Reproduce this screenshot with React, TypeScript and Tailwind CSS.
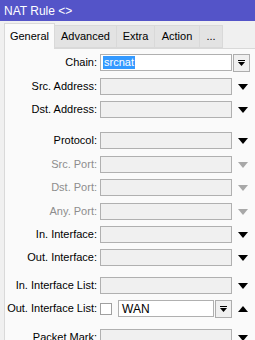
import type { ReactNode } from 'react'

const Arrow = ({ up, muted }: { up?: boolean; muted?: boolean }) => (
  <svg width="10" height="6" viewBox="0 0 10 6" className={up ? 'rotate-180' : ''}>
    <path d="M0 0H10L5 6Z" fill={muted ? '#a8a8a8' : '#000'} />
  </svg>
)

const PickButton = () => (
  <div className="w-[17px] h-[18px] border border-[#adadad] bg-[#f0f0f0] flex flex-col items-center justify-center">
    <div className="w-[7px] h-px bg-black mb-[1px]" />
    <svg width="7" height="4" viewBox="0 0 7 4">
      <path d="M0 0H7L3.5 4Z" fill="#000" />
    </svg>
  </div>
)

const Label = ({ children, muted }: { children: ReactNode; muted?: boolean }) => (
  <div className={`w-[92px] text-right whitespace-nowrap ${muted ? 'text-[#8d8d8d]' : 'text-black'}`}>{children}</div>
)

const Field = ({ label, muted, className = '' }: { label: string; muted?: boolean; className?: string }) => (
  <div className={`flex items-center h-[17px] ${className}`}>
    <Label muted={muted}>{label}</Label>
    <div className="ml-[3px] w-[132px] h-[17px] border border-[#b0b0b0] bg-[#f0f0f0]" />
    <div className="ml-[6px] flex items-center">
      <Arrow muted={muted} />
    </div>
  </div>
)

const Separator = ({ className = '' }: { className?: string }) => (
  <div className={`ml-[3px] w-[240px] h-px bg-[#cfcfcf] ${className}`} />
)

export default function App() {
  return (
    <div className="w-[255px] h-[340px] overflow-hidden bg-[#f0f0f0] font-['Liberation_Sans',Arial,sans-serif] text-[11px] leading-none">
      <div className="h-[21px] bg-[#5454c8] text-white text-[12px] pl-1 flex items-center">NAT Rule &lt;&gt;</div>

      <div className="h-[27px] flex items-end pl-1">
        <div className="w-[51px] h-[26px] border border-b-0 border-[#d9d9d9] bg-[#fafafa] flex items-center justify-center relative top-px">
          General
        </div>
        <div className="w-[62px] h-[23px] border border-l-0 border-[#d9d9d9] bg-[#e3e3e3] flex items-center justify-center">
          Advanced
        </div>
        <div className="w-[38px] h-[23px] border border-l-0 border-[#d9d9d9] bg-[#e3e3e3] flex items-center justify-center">
          Extra
        </div>
        <div className="w-[45px] h-[23px] border border-l-0 border-[#d9d9d9] bg-[#e3e3e3] flex items-center justify-center">
          Action
        </div>
        <div className="w-[23px] h-[23px] border border-l-0 border-[#d9d9d9] bg-[#e3e3e3] flex items-center justify-center">
          ...
        </div>
      </div>

      <div className="ml-1 h-[292px] border-l border-t border-[#d9d9d9] bg-[#fafafa] pt-[5px] flex flex-col">
        <div className="flex items-center h-[17px]">
          <Label>Chain:</Label>
          <div className="ml-[3px] w-[132px] h-[17px] border border-[#b0b0b0] bg-white flex items-center pl-[2px]">
            <span className="bg-[#3399ff] text-white h-[13px] px-px flex items-center">srcnat</span>
          </div>
          <div className="ml-px">
            <PickButton />
          </div>
        </div>
        <Field label="Src. Address:" className="mt-[7px]" />
        <Field label="Dst. Address:" className="mt-[6px]" />
        <Separator className="mt-[8px]" />
        <Field label="Protocol:" className="mt-[6px]" />
        <Field label="Src. Port:" muted className="mt-[7px]" />
        <Field label="Dst. Port:" muted className="mt-[6px]" />
        <Field label="Any. Port:" muted className="mt-[7px]" />
        <Field label="In. Interface:" className="mt-[6px]" />
        <Field label="Out. Interface:" className="mt-[6px]" />
        <Separator className="mt-[5px]" />
        <Field label="In. Interface List:" className="mt-[6px]" />
        <div className="flex items-center h-[17px] mt-[6px]">
          <Label>Out. Interface List:</Label>
          <div className="ml-[3px] w-[12px] h-[12px] border border-[#a0a0a0] bg-white" />
          <div className="ml-[6px] w-[96px] h-[17px] border border-[#b0b0b0] bg-white flex items-center pl-[3px] text-[12px]">
            WAN
          </div>
          <div className="ml-px">
            <PickButton />
          </div>
          <div className="ml-[6px] flex items-center">
            <Arrow up />
          </div>
        </div>
        <Separator className="mt-[6px]" />
        <Field label="Packet Mark:" className="mt-[6px]" />
      </div>
    </div>
  )
}
